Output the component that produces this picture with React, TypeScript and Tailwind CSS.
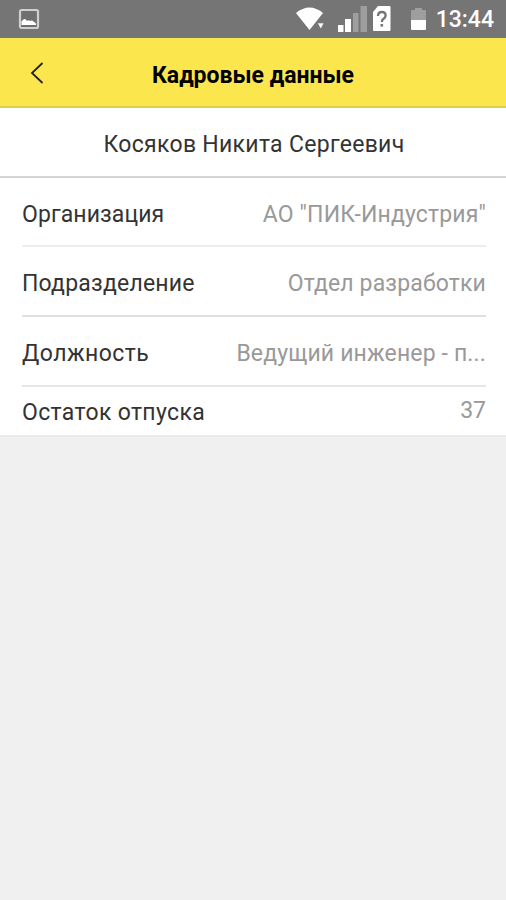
export default function App() {
  const rows = [
    {
      label: 'Организация',
      value: 'АО "ПИК-Индустрия"',
      line: 'border-[#ececec]',
      spacing: 'tracking-[0.1px]',
    },
    {
      label: 'Подразделение',
      value: 'Отдел разработки',
      line: 'border-[#dfdfdf]',
      spacing: 'tracking-[0.2px]',
    },
    {
      label: 'Должность',
      value: 'Ведущий инженер - п...',
      line: 'border-[#e6e6e6]',
      spacing: 'tracking-[0.45px]',
    },
  ];

  return (
    <div className="w-full h-screen bg-[#f0f0f0] font-['Roboto',sans-serif] text-[23px] text-[#333] overflow-hidden">
      {/* Status bar */}
      <div className="h-[38px] bg-[#757575] flex items-center pl-[18px] pr-3 text-white">
        <svg width="22" height="22" viewBox="0 0 22 22">
          <rect x="2" y="2" width="18" height="18" rx="1.5" fill="#6f6f6f" stroke="#cfcfcf" strokeWidth="2.2" />
          <path d="M3.500 17v-3.500q1.500-2.500 3-2.500t2.500 2q1.500-1.500 3 0 1.500-1 3 0t3 2.500V17z" fill="#fff" />
        </svg>

        <div className="ml-auto flex items-center">
          {/* Wi-Fi */}
          <svg width="30" height="26" viewBox="0 0 30 26" className="mr-[12px]">
            <path d="M1 7Q14.500-4 28 7L14.500 24z" fill="#fff" />
            <path d="M22.500 17h6.500l-3.200 6z" fill="#fff" stroke="#757575" strokeWidth="0.6" />
          </svg>
          {/* Signal */}
          <svg width="32" height="28" viewBox="0 0 32 28" className="mr-[3px]">
            <path d="M1 20h5.500v7H1z M8 14h6v13H8z" fill="#fff" />
            <path d="M16 8h5.500v19H16z M23.500 1h6.500v26h-6.500z" fill="#9e9e9e" />
          </svg>
          {/* SIM */}
          <svg width="20" height="26" viewBox="0 0 20 26" className="mr-[18px]">
            <path d="M6 0h11.500q1 0 1 1v23q0 1-1 1H2q-1 0-1-1V6z" fill="#fff" />
            <path
              d="M6 10q0-4 3.800-4t3.800 3.400q0 2-2 3.400-1.800 1.200-1.800 3.200"
              fill="none"
              stroke="#757575"
              strokeWidth="2.3"
            />
            <path d="M8.500 18h2.600v2.600H8.500z" fill="#757575" />
          </svg>
          {/* Battery */}
          <svg width="17" height="24" viewBox="0 0 17 24" className="mr-[9px]">
            <path d="M1 4q0-1 1-1h3V1h7v2h3q1 0 1 1v9H1z" fill="#9e9e9e" />
            <path d="M1 13h15v9q0 1-1 1H2q-1 0-1-1z" fill="#fff" />
          </svg>
          <span className="pt-[3px] font-medium">13:44</span>
        </div>
      </div>

      {/* Header */}
      <header className="h-[70px] bg-[#fce64d] border-b-2 border-[#dfce4c] flex items-center relative">
        <svg width="14" height="22" viewBox="0 0 14 22" className="absolute left-[30px] top-[24px]">
          <path d="M12.500 1L2 11l10.500 10" fill="none" stroke="#222" strokeWidth="1.8" />
        </svg>
        <h1 className="w-full pt-[8px] text-center font-bold text-black">Кадровые данные</h1>
      </header>

      <div className="h-[70px] pt-[7px] pl-[2px] bg-white border-b-2 border-[#d4d4d4] flex items-center justify-center tracking-[0.3px]">
        Косяков Никита Сергеевич
      </div>

      <div className="bg-white pl-[22px] pr-5">
        {rows.map((row) => (
          <div
            key={row.label}
            className={`h-[70px] first:h-[69px] pt-[6px] first:pt-[8px] border-b-2 flex items-center justify-between ${row.line}`}
          >
            <span className={row.spacing}>{row.label}</span>
            <span className="tracking-[0.15px] text-[#999]">{row.value}</span>
          </div>
        ))}
        <div className="h-[48px] flex items-center justify-between">
          <span className="pt-[4px] tracking-[0.35px]">Остаток отпуска</span>
          <span className="text-[#999]">37</span>
        </div>
      </div>
      <div className="h-[2px] bg-[#e9e9e9]" />
    </div>
  );
}
